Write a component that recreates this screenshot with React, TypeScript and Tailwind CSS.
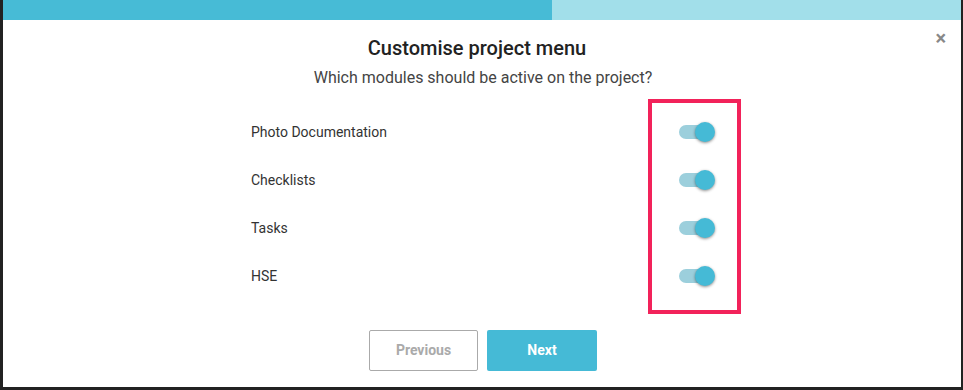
const modules = ["Photo Documentation", "Checklists", "Tasks", "HSE"];

function Toggle() {
  return (
    <div className="relative h-5 w-[36px]">
      <div className="absolute left-0 top-[3px] h-[14px] w-[32px] rounded-full bg-[#9ccfdc]" />
      <div className="absolute right-0 top-0 h-5 w-5 rounded-full bg-[#45bad6] shadow-[0_1px_3px_rgba(0,0,0,0.45)]" />
    </div>
  );
}

export default function App() {
  return (
    <div className="relative h-[390px] w-[963px] overflow-hidden border-b-[3px] border-l-[3px] border-r-[2px] border-[#222] bg-white font-['Roboto',sans-serif]">
      <div className="flex h-[20px]">
        <div className="w-[549px] bg-[#47bbd6]" />
        <div className="flex-1 bg-[#a2dfea]" />
      </div>

      <button className="absolute right-[15px] top-[28px] text-[20px] font-bold leading-5 text-[#888]">×</button>

      <div className="ml-[2px] flex flex-col items-center pt-[16px]">
        <h2 className="mr-[12px] text-[20px] font-medium leading-6 text-[#222]">Customise project menu</h2>
        <p className="mt-[6px] text-[16px] leading-6 text-[#444]">Which modules should be active on the project?</p>

        <div className="mt-[18px] flex w-[464px] flex-col">
          {modules.map((name) => (
            <div key={name} className="flex h-[48px] items-center justify-between">
              <span className="text-[14px] text-[#333]">{name}</span>
              <Toggle />
            </div>
          ))}
        </div>

        <div className="mt-[30px] flex gap-[9px]">
          <button className="h-[41px] w-[109px] rounded-[2px] border border-[#aaa] text-[14px] font-bold text-[#aaa]">
            Previous
          </button>
          <button className="h-[41px] w-[110px] rounded-[2px] bg-[#45bad6] text-[14px] font-bold text-white">
            Next
          </button>
        </div>
      </div>

      <div className="pointer-events-none absolute left-[645px] top-[99px] h-[215px] w-[93px] border-4 border-[#f2225a]" />
    </div>
  );
}
